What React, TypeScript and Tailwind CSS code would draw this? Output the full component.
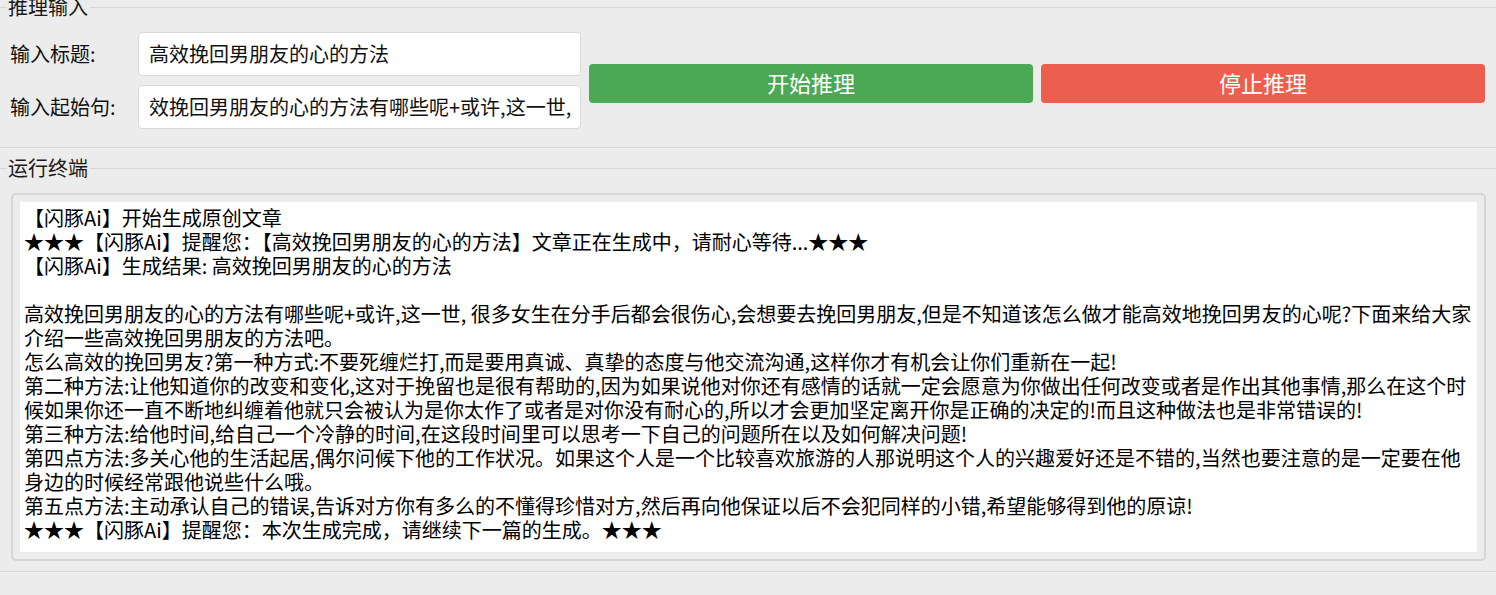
import React from 'react'

const terminalLines = [
  '【闪豚Ai】开始生成原创文章',
  '★★★【闪豚Ai】提醒您：【高效挽回男朋友的心的方法】文章正在生成中，请耐心等待...★★★',
  '【闪豚Ai】生成结果: 高效挽回男朋友的心的方法',
  '',
  '高效挽回男朋友的心的方法有哪些呢+或许,这一世, 很多女生在分手后都会很伤心,会想要去挽回男朋友,但是不知道该怎么做才能高效地挽回男友的心呢?下面来给大家',
  '介绍一些高效挽回男朋友的方法吧。',
  '怎么高效的挽回男友?第一种方式:不要死缠烂打,而是要用真诚、真挚的态度与他交流沟通,这样你才有机会让你们重新在一起!',
  '第二种方法:让他知道你的改变和变化,这对于挽留也是很有帮助的,因为如果说他对你还有感情的话就一定会愿意为你做出任何改变或者是作出其他事情,那么在这个时',
  '候如果你还一直不断地纠缠着他就只会被认为是你太作了或者是对你没有耐心的,所以才会更加坚定离开你是正确的决定的!而且这种做法也是非常错误的!',
  '第三种方法:给他时间,给自己一个冷静的时间,在这段时间里可以思考一下自己的问题所在以及如何解决问题!',
  '第四点方法:多关心他的生活起居,偶尔问候下他的工作状况。如果这个人是一个比较喜欢旅游的人那说明这个人的兴趣爱好还是不错的,当然也要注意的是一定要在他',
  '身边的时候经常跟他说些什么哦。',
  '第五点方法:主动承认自己的错误,告诉对方你有多么的不懂得珍惜对方,然后再向他保证以后不会犯同样的小错,希望能够得到他的原谅!',
  '★★★【闪豚Ai】提醒您：本次生成完成，请继续下一篇的生成。★★★',
]

function Field({ label, value }: { label: string; value: string }) {
  return (
    <div className="flex items-center">
      <div className="w-[138px] pl-[10px] text-[20px] leading-[24px] text-[#111]">{label}</div>
      <div className="w-[443px] h-[44px] flex items-center bg-white border border-[#d9d9d9] rounded-[4px] pl-[10px] overflow-hidden whitespace-nowrap text-[20px] leading-[24px] text-[#111]">
        {value}
      </div>
    </div>
  )
}

export default function App() {
  return (
    <div className="w-[1496px] h-[595px] overflow-hidden bg-[#ececec] font-['Noto_Sans_CJK_SC',sans-serif]">
      {/* 推理输入 */}
      <fieldset className="-mt-[3px] border-y border-x-0 border-[#d7d7d7] p-0 m-0">
        <legend className="ml-[7px] pl-[1px] pr-[2px] text-[20px] leading-[20px] text-[#1a1a1a]">推理输入</legend>
        <div className="flex items-start pt-[15px] pb-[18px]">
          <div className="flex flex-col gap-[9px]">
            <Field label="输入标题:" value="高效挽回男朋友的心的方法" />
            <Field label="输入起始句:" value="效挽回男朋友的心的方法有哪些呢+或许,这一世, " />
          </div>
          <div className="flex gap-[8px] ml-[8px] mt-[32px]">
            <button className="w-[444px] h-[39px] pb-[4px] rounded-[4px] bg-[#4ba955] text-white text-[22px] leading-[24px]">
              开始推理
            </button>
            <button className="w-[444px] h-[39px] pb-[4px] rounded-[4px] bg-[#ec5f4e] text-white text-[22px] leading-[24px]">
              停止推理
            </button>
          </div>
        </div>
      </fieldset>

      {/* 运行终端 */}
      <fieldset className="mt-[10px] border-y border-x-0 border-[#d7d7d7] p-0 m-0">
        <legend className="ml-[7px] pl-[1px] pr-[2px] text-[20px] leading-[20px] text-[#1a1a1a]">运行终端</legend>
        <div className="pt-[15px] pb-[10px] px-[11px]">
          <div className="w-[1475px] h-[368px] border-2 border-[#d6d6d6] rounded-[5px] p-[7px] flex">
            <div className="flex-1 bg-white pt-[4px] pl-[4px] text-[20px] leading-[24px] text-black">
              {terminalLines.map((line, i) =>
                line === '' ? (
                  <div key={i} className="h-[24px]" />
                ) : (
                  <div key={i} className="whitespace-pre">
                    {line}
                  </div>
                )
              )}
            </div>
          </div>
        </div>
      </fieldset>
    </div>
  )
}
